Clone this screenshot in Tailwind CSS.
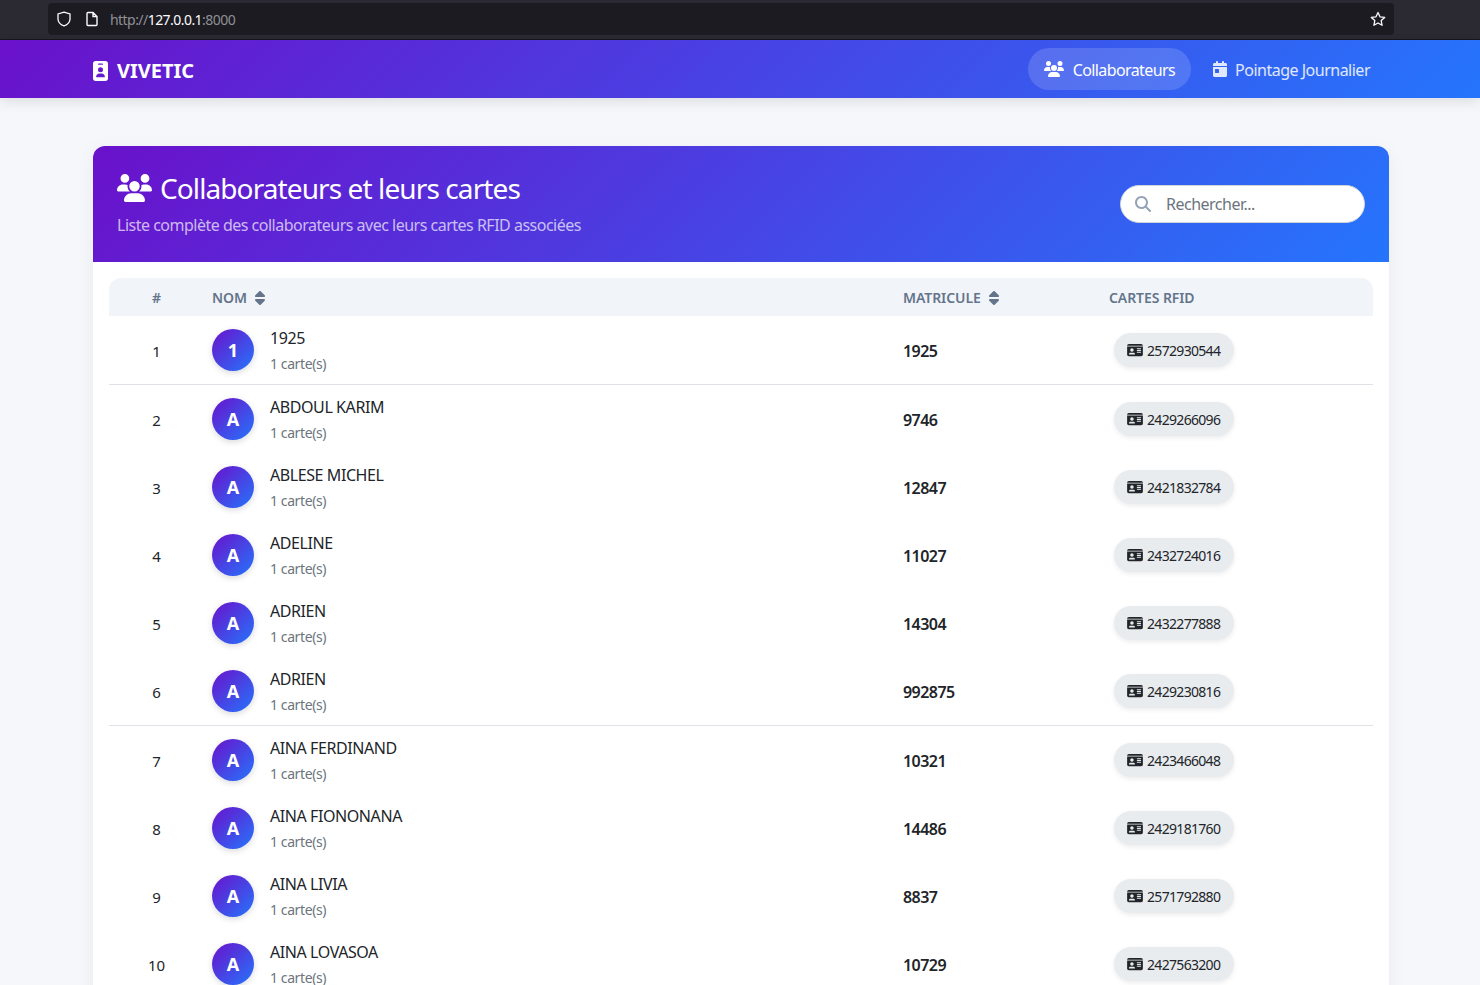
<!DOCTYPE html>
<html>
  <head>
    <meta charset="UTF-8" />
    <title>Collaborateurs</title>
    <script src="https://cdn.jsdelivr.net/npm/@tailwindcss/browser@4"></script>
  </head>
  <body class="h-[985px] overflow-hidden bg-[#f5f7fa] font-['Noto_Sans',sans-serif] text-[#212529]">
    <!-- barre du navigateur -->
    <div class="flex h-[40px] items-start border-b border-[#16151a] bg-[#2b2a33] px-[48px] pt-[3px]">
      <div class="flex h-[32px] w-[1346px] items-center rounded-[4px] bg-[#1c1b22] pl-[8px] pr-[8px]">
        <svg class="h-[16px] w-[16px]" viewBox="0 0 16 16" fill="none" stroke="#fbfbfe" stroke-width="1.3"><path d="M8 1.2 14 3v5c0 3.400-2.600 5.700-6 6.900C4.600 13.700 2 11.400 2 8V3z" /></svg>
        <svg class="ml-[12px] h-[16px] w-[16px]" viewBox="0 0 16 16" fill="none" stroke="#fbfbfe" stroke-width="1.4"><path d="M3 2.500c0-.6.400-1 1-1h5l4 4v8c0 .6-.4 1-1 1H4c-.6 0-1-.4-1-1zM9 1.500V5.500h4" /></svg>
        <div class="ml-[10px] text-[14px] tracking-[-0.55px] text-[#8f8f94]">http://<span class="text-[#fbfbfe]">127.0.0.1</span>:8000</div>
        <svg class="ml-auto h-[16px] w-[16px]" viewBox="0 0 16 16" fill="none" stroke="#fbfbfe" stroke-width="1.300" stroke-linejoin="round"><path d="m8 1.500 2 4.300 4.700.6-3.500 3.200.9 4.700L8 12l-4.100 2.300.9-4.700L1.300 6.400 6 5.800z" /></svg>
      </div>
    </div>

    <!-- navbar -->
    <nav class="flex h-[58px] items-center justify-between bg-[linear-gradient(135deg,#6a11cb,#2575fc)] pl-[93px] pr-[94px] shadow-[0_4px_12px_rgba(0,0,0,0.1)]">
      <a class="flex items-center text-[20px] font-bold text-white">
        <svg class="mr-[9px] mt-[3px] h-[20px] w-[15px]" viewBox="0 0 384 512" fill="currentColor"><path d="M64 0C28.700 0 0 28.700 0 64V448c0 35.300 28.700 64 64 64H320c35.300 0 64-28.700 64-64V64c0-35.300-28.700-64-64-64H64zm96 320h64c44.200 0 80 35.800 80 80c0 8.800-7.200 16-16 16H96c-8.800 0-16-7.200-16-16c0-44.200 35.800-80 80-80zm-32-96a64 64 0 1 1 128 0 64 64 0 1 1 -128 0zM144 64h96c8.800 0 16 7.200 16 16s-7.200 16-16 16H144c-8.800 0-16-7.200-16-16s7.200-16 16-16z" /></svg>
        <span class="pt-[3px]">VIVETIC</span>
      </a>
      <div class="flex items-center gap-[6px]">
        <a class="flex h-[42px] items-center rounded-[21px] bg-white/15 px-[16px] text-[16px] tracking-[-0.6px] text-white">
          <svg class="mr-[9px] h-[16px] w-[20px]" viewBox="0 0 640 512" fill="currentColor"><path d="M144 0a80 80 0 1 1 0 160A80 80 0 1 1 144 0zM512 0a80 80 0 1 1 0 160A80 80 0 1 1 512 0zM0 298.700C0 239.800 47.800 192 106.700 192h42.700c15.900 0 31 3.500 44.600 9.700c-1.300 7.200-1.900 14.700-1.900 22.300c0 38.200 16.800 72.500 43.300 96c-.2 0-.4 0-.7 0H21.300C9.600 320 0 310.400 0 298.700zM405.300 320c-.2 0-.4 0-.7 0c26.600-23.500 43.300-57.800 43.300-96c0-7.600-.7-15-1.900-22.300c13.600-6.300 28.700-9.700 44.600-9.700h42.700C592.200 192 640 239.800 640 298.700c0 11.800-9.600 21.300-21.300 21.300H405.300zM224 224a96 96 0 1 1 192 0 96 96 0 1 1 -192 0zM128 485.300C128 411.700 187.700 352 261.300 352H378.700C452.300 352 512 411.700 512 485.300c0 14.700-11.900 26.700-26.700 26.700H154.700c-14.700 0-26.700-11.900-26.700-26.700z" /></svg>
          <span class="pt-[2px]">Collaborateurs</span>
        </a>
        <a class="flex h-[42px] items-center rounded-[21px] px-[16px] text-[16px] tracking-[-0.5px] text-white/85">
          <svg class="mr-[8px] h-[16px] w-[14px]" viewBox="0 0 448 512" fill="currentColor"><path d="M128 0c17.700 0 32 14.300 32 32V64H288V32c0-17.700 14.300-32 32-32s32 14.300 32 32V64h48c26.500 0 48 21.500 48 48v48H0V112C0 85.500 21.500 64 48 64H96V32c0-17.700 14.300-32 32-32zM0 192H448V464c0 26.500-21.500 48-48 48H48c-26.500 0-48-21.500-48-48V192zm80 64c-8.800 0-16 7.200-16 16v96c0 8.800 7.200 16 16 16h96c8.800 0 16-7.200 16-16V272c0-8.800-7.200-16-16-16H80z" /></svg>
          <span class="pt-[2px]">Pointage Journalier</span>
        </a>
      </div>
    </nav>

    <main class="px-[93px] pr-[91px] pt-[48px]">
      <section class="overflow-hidden rounded-t-[12px] bg-white shadow-[0_4px_20px_rgba(0,0,0,0.05)]">
        <header class="flex h-[116px] items-center justify-between bg-[linear-gradient(135deg,#6a11cb,#2575fc)] pl-[24px] pr-[24px]">
          <div>
            <h1 class="flex items-center text-[28px] leading-[34px] tracking-[-0.9px] text-white">
              <svg class="mr-[8px] h-[28px] w-[35px]" viewBox="0 0 640 512" fill="currentColor"><path d="M144 0a80 80 0 1 1 0 160A80 80 0 1 1 144 0zM512 0a80 80 0 1 1 0 160A80 80 0 1 1 512 0zM0 298.700C0 239.800 47.800 192 106.700 192h42.700c15.900 0 31 3.500 44.600 9.700c-1.300 7.200-1.900 14.700-1.900 22.300c0 38.200 16.800 72.500 43.300 96c-.2 0-.4 0-.7 0H21.300C9.600 320 0 310.400 0 298.700zM405.300 320c-.2 0-.4 0-.7 0c26.600-23.500 43.300-57.800 43.300-96c0-7.600-.7-15-1.900-22.300c13.600-6.300 28.700-9.700 44.600-9.700h42.700C592.200 192 640 239.800 640 298.700c0 11.800-9.600 21.300-21.300 21.300H405.300zM224 224a96 96 0 1 1 192 0 96 96 0 1 1 -192 0zM128 485.300C128 411.700 187.700 352 261.300 352H378.700C452.300 352 512 411.700 512 485.300c0 14.700-11.900 26.700-26.700 26.700H154.700c-14.700 0-26.700-11.900-26.700-26.700z" /></svg>
              Collaborateurs et leurs cartes
            </h1>
            <p class="mt-[8px] text-[16px] leading-[24px] tracking-[-0.5px] text-white/70">Liste complète des collaborateurs avec leurs cartes RFID associées</p>
          </div>
          <div class="flex h-[38px] w-[245px] items-center rounded-[19px] border border-[#ced4da] bg-white pl-[14px]">
            <svg class="h-[16px] w-[16px] text-[#94a3b8]" viewBox="0 0 512 512" fill="currentColor"><path d="M416 208c0 45.900-14.900 88.300-40 122.700L502.600 457.400c12.500 12.500 12.500 32.800 0 45.300s-32.800 12.500-45.300 0L330.700 376c-34.400 25.200-76.800 40-122.700 40C93.100 416 0 322.900 0 208S93.100 0 208 0S416 93.100 416 208zM208 352a144 144 0 1 0 0-288 144 144 0 1 0 0 288z" /></svg>
            <span class="ml-[15px] text-[16px] tracking-[-0.5px] text-[#6c757d]">Rechercher...</span>
          </div>
        </header>

        <div class="px-[16px] pt-[16px]">
          <table class="w-full table-fixed border-separate border-spacing-0 text-[16px]">
            <colgroup>
              <col class="w-[95px]" /><col class="w-[691px]" /><col class="w-[206px]" /><col />
            </colgroup>
            <thead>
              <tr class="h-[38px] text-left text-[14px] tracking-[-0.08px] text-[#64748b]">
                <th class="rounded-tl-[12px] bg-[#f1f5f9] text-center font-semibold">#</th>
                <th class="bg-[#f1f5f9] pl-[8px] font-semibold"><span class="inline-flex items-center">NOM
                  <svg class="ml-[8px] mt-[2px] h-[16px] w-[10px]" viewBox="0 0 320 512" fill="currentColor"><path d="M137.400 41.400c12.500-12.500 32.800-12.500 45.300 0l128 128c9.200 9.200 11.900 22.900 6.900 34.900s-16.600 19.800-29.600 19.800H32c-12.900 0-24.600-7.800-29.600-19.800s-2.200-25.700 6.900-34.900l128-128zm0 429.300l-128-128c-9.200-9.200-11.900-22.900-6.900-34.900s16.600-19.800 29.600-19.800H288c12.900 0 24.600 7.800 29.600 19.800s2.200 25.700-6.900 34.900l-128 128c-12.500 12.500-32.800 12.500-45.300 0z" /></svg></span></th>
                <th class="bg-[#f1f5f9] pl-[8px] font-semibold"><span class="inline-flex items-center">MATRICULE
                  <svg class="ml-[8px] mt-[2px] h-[16px] w-[10px]" viewBox="0 0 320 512" fill="currentColor"><path d="M137.400 41.400c12.500-12.500 32.800-12.500 45.300 0l128 128c9.200 9.200 11.900 22.900 6.900 34.900s-16.600 19.800-29.600 19.800H32c-12.900 0-24.600-7.800-29.600-19.800s-2.200-25.700 6.900-34.900l128-128zm0 429.300l-128-128c-9.200-9.200-11.900-22.900-6.900-34.900s16.600-19.800 29.600-19.800H288c12.900 0 24.600 7.800 29.600 19.800s2.200 25.700-6.900 34.900l-128 128c-12.500 12.500-32.800 12.500-45.300 0z" /></svg></span></th>
                <th class="rounded-tr-[12px] bg-[#f1f5f9] pl-[8px] font-semibold">CARTES RFID</th>
              </tr>
            </thead>
            <tbody id="rows"></tbody>
          </table>
        </div>
      </section>
    </main>

    <script>
      const collaborateurs = [
        ['1925', '1925', '2572930544', true],
        ['ABDOUL KARIM', '9746', '2429266096'],
        ['ABLESE MICHEL', '12847', '2421832784'],
        ['ADELINE', '11027', '2432724016'],
        ['ADRIEN', '14304', '2432277888'],
        ['ADRIEN', '992875', '2429230816', true],
        ['AINA FERDINAND', '10321', '2423466048'],
        ['AINA FIONONANA', '14486', '2429181760'],
        ['AINA LIVIA', '8837', '2571792880'],
        ['AINA LOVASOA', '10729', '2427563200'],
      ];

      // seules certaines lignes gardent leur filet visible, comme a l'ecran
      document.getElementById('rows').innerHTML = collaborateurs.map((c, i) => {
        const td = c[3] ? 'border-b border-[#dee2e6]' : '';
        return `
        <tr class="${c[3] ? 'h-[69px]' : 'h-[68px]'}">
          <td class="${td} pt-[2px] text-center text-[15px]">${i + 1}</td>
          <td class="${td} pl-[8px]">
            <div class="flex items-center">
              <div class="flex h-[42px] w-[42px] items-center justify-center rounded-full bg-[linear-gradient(135deg,#6a11cb,#2575fc)] text-[18px] font-bold text-white shadow-[0_2px_6px_rgba(0,0,0,0.15)]">${c[0][0]}</div>
              <div class="ml-[16px]">
                <div class="text-[16px] leading-[24px] tracking-[-0.42px]">${c[0]}</div>
                <div class="mt-[4px] text-[14px] leading-[20px] tracking-[-0.4px] text-[#6c757d]">1 carte(s)</div>
              </div>
            </div>
          </td>
          <td class="${td} pl-[8px] pt-[2px] text-[16px] font-semibold tracking-[-0.55px]">${c[1]}</td>
          <td class="${td} pl-[13px]">
            <span class="inline-flex h-[34px] w-[120px] items-center rounded-[17px] bg-[#e9ecef] pl-[13px] text-[14px] tracking-[-0.68px] shadow-[0_2px_5px_rgba(0,0,0,0.08)]">
              <svg class="mr-[4px] h-[14px] w-[16px]" viewBox="0 0 576 512" fill="currentColor"><path d="M0 96l576 0c0-35.300-28.700-64-64-64H64C28.700 32 0 60.700 0 96zm0 32V416c0 35.300 28.700 64 64 64H512c35.300 0 64-28.700 64-64V128H0zM64 405.300c0-29.500 23.900-53.300 53.300-53.300H234.700c29.500 0 53.300 23.900 53.300 53.300c0 5.900-4.800 10.700-10.700 10.700H74.700c-5.900 0-10.700-4.800-10.700-10.700zM176 192a64 64 0 1 1 0 128 64 64 0 1 1 0-128zm176 16c0-8.800 7.200-16 16-16H496c8.800 0 16 7.200 16 16s-7.200 16-16 16H368c-8.800 0-16-7.200-16-16zm0 64c0-8.800 7.200-16 16-16H496c8.800 0 16 7.200 16 16s-7.200 16-16 16H368c-8.800 0-16-7.200-16-16zm0 64c0-8.800 7.200-16 16-16H496c8.800 0 16 7.200 16 16s-7.200 16-16 16H368c-8.800 0-16-7.200-16-16z" /></svg>
              ${c[2]}
            </span>
          </td>
        </tr>`;
      }).join('');
    </script>
  </body>
</html>
